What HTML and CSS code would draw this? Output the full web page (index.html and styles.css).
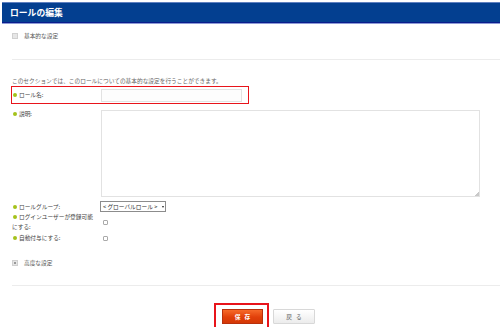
FILE: index.html
```html
<!DOCTYPE html>
<html lang="ja">
<head>
    <meta charset="UTF-8">
    <title>ロールの編集</title>
    <link rel="stylesheet" href="styles.css">
</head>
<body>
    <div class="header">ロールの編集</div>

    <div class="toggle">
        <span class="toggle-icon minus"></span>基本的な設定
    </div>
    <div class="rule"></div>

    <div class="intro">このセクションでは、このロールについての基本的な設定を行うことができます。</div>

    <div class="form">
        <div class="row marked">
            <label class="label"><span class="dot"></span>ロール名:</label>
            <input type="text" class="text-input">
        </div>
        <div class="row top">
            <label class="label"><span class="dot"></span>説明:</label>
            <div class="textarea-wrap">
                <textarea class="textarea"></textarea>
            </div>
        </div>
        <div class="row group">
            <label class="label"><span class="dot"></span>ロールグループ:</label>
            <div class="select">&lt; グローバルロール &gt;<span class="caret"></span></div>
        </div>
        <div class="row">
            <label class="label narrow"><span class="dot"></span>ログインユーザーが登録可能にする:</label>
            <input type="checkbox" class="check">
        </div>
        <div class="row auto">
            <label class="label"><span class="dot"></span>自動付与にする:</label>
            <input type="checkbox" class="check">
        </div>
    </div>

    <div class="toggle advanced">
        <span class="toggle-icon plus"></span>高度な設定
    </div>
    <div class="rule bottom"></div>

    <div class="actions">
        <div class="marked-button">
            <button class="btn save">保存</button>
        </div>
        <button class="btn back">戻る</button>
    </div>
</body>
</html>
```

FILE: styles.css
```css
body {
    margin: 0;
    font-family: "Noto Sans CJK JP", "Liberation Sans", sans-serif;
    font-size: 5.7px;
    line-height: 10px;
    color: #555;
    background-color: #fff;
}

.header {
    margin: 2px 0 0 2px;
    height: 19px;
    line-height: 19px;
    padding-left: 8px;
    background-color: #033f90;
    border-top: 1px solid #5f80c0;
    border-bottom: 1px solid #0a1c8c;
    box-shadow: 0 1px 0 #8d9bd6;
    color: #fff;
    font-size: 8.8px;
    font-weight: bold;
}

.toggle {
    margin-top: 8px;
    padding-left: 12px;
    display: flex;
    align-items: center;
    color: #555;
}

.toggle-icon {
    width: 4px;
    height: 4px;
    margin-right: 6px;
    border: 1px solid #d0d0d0;
    background-color: #e6e6e6;
    position: relative;
}

.toggle-icon.plus::after {
    content: "";
    position: absolute;
    left: 1px;
    top: 1px;
    width: 2px;
    height: 2px;
    background-color: #999;
}

.rule {
    margin: 18px 0 0 12px;
    height: 1px;
    background-color: #ececec;
}

.intro {
    margin: 16px 0 0 12px;
    color: #666;
}

.form {
    padding-left: 12px;
}

.row {
    display: grid;
    grid-template-columns: 89px auto;
    align-items: center;
    justify-items: start;
}

.row.marked {
    margin-top: 1px;
    width: 236px;
    height: 16px;
    outline: 1.5px solid #e8141b;
}

.row.top {
    align-items: start;
    margin-top: 7px;
}

.row.top .label {
    line-height: 8px;
}

.row.group {
    margin-top: 4px;
}

.row.auto {
    margin-top: 1px;
}

.label {
    color: #444;
}

.label.narrow {
    max-width: 84px;
}

.dot {
    display: inline-block;
    width: 4px;
    height: 4px;
    margin: 0 2px 0 1px;
    border-radius: 50%;
    background-color: #a4c21a;
    vertical-align: 0;
}

.text-input {
    box-sizing: border-box;
    width: 141px;
    height: 13px;
    margin: 0;
    padding: 0;
    border: 1px solid #e2e2e2;
    background-color: #fdfdfd;
    outline: none;
}

.textarea-wrap {
    position: relative;
    display: flex;
}

.textarea-wrap::after {
    content: "";
    position: absolute;
    right: 1px;
    bottom: 1px;
    width: 4px;
    height: 4px;
    background: linear-gradient(135deg, transparent 50%, #c8c8c8 50%);
}

.textarea {
    box-sizing: border-box;
    width: 379px;
    height: 87px;
    margin: 0;
    border: 1px solid #e2e2e2;
    background-color: #fff;
    resize: none;
    outline: none;
}

.select {
    box-sizing: border-box;
    width: 66px;
    height: 11px;
    margin-left: -1px;
    padding-left: 2px;
    border: 1px solid #8c8c8c;
    display: flex;
    align-items: center;
    justify-content: space-between;
    line-height: 9px;
    color: #333;
    white-space: pre;
}

.caret {
    width: 0;
    height: 0;
    margin-right: 1px;
    border-left: 1.5px solid transparent;
    border-right: 1.5px solid transparent;
    border-top: 2.5px solid #222;
}

.check {
    appearance: none;
    width: 5px;
    height: 5px;
    margin: 0 0 0 2px;
    border: 1px solid #aaa;
    border-radius: 1px;
    background-color: #fff;
}

.toggle.advanced {
    margin-top: 15px;
}

.rule.bottom {
    margin-top: 17px;
}

.actions {
    margin-top: 19px;
    padding-left: 216px;
    display: flex;
    align-items: center;
}

.marked-button {
    padding: 4px 4px 3px 6px;
    outline: 2px solid #e8141b;
    display: flex;
}

.btn {
    height: 15px;
    margin: 0;
    padding: 0 0 0 4px;
    font-family: inherit;
    font-size: 5.7px;
    letter-spacing: 4px;
    cursor: pointer;
}

.save {
    width: 41px;
    border: 1px solid #b8300c;
    background: linear-gradient(#f66a2a, #e2400a 55%, #d43806);
    color: #fff;
    font-weight: bold;
}

.back {
    width: 42px;
    margin-left: 6px;
    border: 1px solid #d8d8d8;
    border-radius: 1px;
    background: linear-gradient(#fff, #ececec);
    color: #555;
}
```
